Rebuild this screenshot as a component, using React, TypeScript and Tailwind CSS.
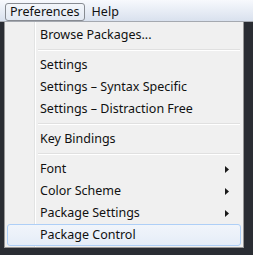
import React from 'react';

type Item =
  | { kind: 'item'; label: string; sub?: boolean; active?: boolean }
  | { kind: 'sep' };

const ITEMS: Item[] = [
  { kind: 'item', label: 'Browse Packages...' },
  { kind: 'sep' },
  { kind: 'item', label: 'Settings' },
  { kind: 'item', label: 'Settings – Syntax Specific' },
  { kind: 'item', label: 'Settings – Distraction Free' },
  { kind: 'sep' },
  { kind: 'item', label: 'Key Bindings' },
  { kind: 'sep' },
  { kind: 'item', label: 'Font', sub: true },
  { kind: 'item', label: 'Color Scheme', sub: true },
  { kind: 'item', label: 'Package Settings', sub: true },
  { kind: 'item', label: 'Package Control', active: true },
];

function Arrow() {
  return (
    <svg width="4" height="7" viewBox="0 0 4 7" className="block">
      <path d="M0 0 L4 3.5 L0 7 Z" fill="#1a1a1a" />
    </svg>
  );
}

export default function App() {
  return (
    <div
      className="w-[253px] h-[255px] bg-[#2a2d33] flex flex-col overflow-hidden text-[12.5px] text-[#111]"
      style={{ fontFamily: '"Noto Sans", "Open Sans", sans-serif' }}
    >
      {/* menu bar */}
      <div className="h-[22px] shrink-0 flex items-start pt-[3px] pl-[5px] gap-[2px] bg-gradient-to-b from-[#f7f9fd] to-[#d9e1ee] border-b border-[#a5a9b0]">
        <div className="h-[18px] px-[4px] flex items-center rounded-[3px] border border-[#878b92] bg-gradient-to-b from-[#f3f6fb] to-[#e3e9f3] leading-none">
          Preferences
        </div>
        <div className="h-[18px] px-[5px] flex items-center leading-none">Help</div>
      </div>

      {/* dropdown */}
      <div className="ml-[4px] w-[240px] h-[226px] bg-[#f0f0f0] border border-t-0 border-[#979797] relative">
        <div className="absolute left-[29px] top-0 bottom-0 w-[2px] border-l border-[#e2e3e3] bg-white" />
        <div className="relative pt-[2px] px-[2px] flex flex-col">
          {ITEMS.map((it, i) =>
            it.kind === 'sep' ? (
              <div key={i} className="h-[8px] flex items-center pl-[31px] pr-[1px]">
                <div className="w-full h-[2px] border-t border-[#e0e0e0] bg-white" />
              </div>
            ) : (
              <div
                key={i}
                className={
                  it.active
                    ? 'h-[22px] flex items-center pl-[32px] pr-[11px] rounded-[3px] border border-[#aecff7] bg-gradient-to-b from-[#f1f5fb] to-[#e5edf8]'
                    : 'h-[22px] flex items-center pl-[33px] pr-[12px]'
                }
              >
                <span className="flex-1 leading-none">{it.label}</span>
                {it.sub && <Arrow />}
              </div>
            )
          )}
        </div>
      </div>
    </div>
  );
}
